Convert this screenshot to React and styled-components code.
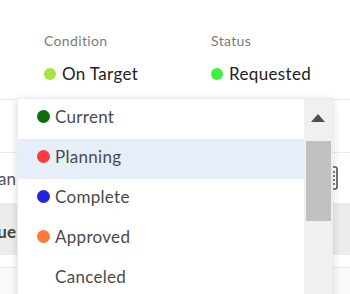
import styled, { createGlobalStyle } from "styled-components";

const GlobalStyle = createGlobalStyle`
  html, body {
    margin: 0;
    padding: 0;
    background: #fff;
    font-family: Lato, "Open Sans", Arial, sans-serif;
  }
`;

const summary = [
  { label: "Condition", value: "On Target", color: "#a6e63a" },
  { label: "Status", value: "Requested", color: "#3cf23c" },
];

const options = [
  { text: "Current", color: "#0b6e0b" },
  { text: "Planning", color: "#ff3a3f", active: true },
  { text: "Complete", color: "#2424dc" },
  { text: "Approved", color: "#ff7a38" },
  { text: "Canceled" },
];

export default function App() {
  return (
    <>
      <GlobalStyle />
      <Page>
        <Summary>
          {summary.map((item) => (
            <Field key={item.label}>
              <Label>{item.label}</Label>
              <Value>
                <Dot $color={item.color} />
                {item.value}
              </Value>
            </Field>
          ))}
        </Summary>
        <BlankRow />
        <ToolRow>
          <Clip>
            <span>Plan</span>
          </Clip>
          <ToolIcon width="20" height="24" viewBox="0 0 20 24">
            <rect x="1" y="1" width="18" height="22" rx="2" fill="#fff" stroke="#555" strokeWidth="1.6" />
            <path d="M13 6h4M13 10h4M13 14h4M13 18h4" stroke="#555" strokeWidth="1.6" />
          </ToolIcon>
        </ToolRow>
        <HeaderRow>
          <Clip $bold>
            <span>Value</span>
          </Clip>
        </HeaderRow>
        <SpacerRow />
        <Rest />

        <Dropdown>
          <List>
            {options.map((opt) => (
              <Option key={opt.text} $active={opt.active}>
                {opt.color ? <Dot $color={opt.color} $size={13} /> : <DotSpace />}
                {opt.text}
              </Option>
            ))}
          </List>
          <Scrollbar>
            <ArrowButton>
              <svg width="14" height="8" viewBox="0 0 14 8">
                <path d="M0 8L7 0L14 8Z" fill="#505050" />
              </svg>
            </ArrowButton>
            <Thumb />
          </Scrollbar>
        </Dropdown>
      </Page>
    </>
  );
}

const Page = styled.div`
  position: relative;
  width: 350px;
  height: 294px;
  overflow: hidden;
`;

const Summary = styled.div`
  display: grid;
  grid-template-columns: 167px 1fr;
  padding: 32px 0 0 44px;
  height: 67px;
  border-bottom: 1px solid #e8e8e8;
`;

const Field = styled.div`
  display: flex;
  flex-direction: column;
  gap: 15px;
`;

const Label = styled.div`
  font-size: 14px;
  line-height: 17px;
  letter-spacing: 0.35px;
  color: #7a7a7a;
`;

const Value = styled.div`
  display: flex;
  align-items: center;
  gap: 6px;
  font-size: 17px;
  line-height: 20px;
  letter-spacing: 0.35px;
  color: #222;
`;

const Dot = styled.span`
  width: ${(p) => p.$size || 12}px;
  height: ${(p) => p.$size || 12}px;
  border-radius: 50%;
  background: ${(p) => p.$color};
  flex-shrink: 0;
`;

const DotSpace = styled.span`
  width: 13px;
  flex-shrink: 0;
`;

const BlankRow = styled.div`
  height: 52px;
  border-bottom: 1px solid #ececec;
`;

const ToolRow = styled.div`
  height: 50px;
  display: flex;
  align-items: center;
  justify-content: space-between;
  padding-right: 12px;
`;

const Clip = styled.div`
  width: 16px;
  overflow: hidden;
  display: flex;
  justify-content: flex-end;
  font-size: 17px;
  color: ${(p) => (p.$bold ? "#444" : "#555")};
  font-weight: ${(p) => (p.$bold ? 700 : 400)};
  white-space: nowrap;
`;

const ToolIcon = styled.svg`
  display: block;
`;

const HeaderRow = styled.div`
  height: 52px;
  display: flex;
  align-items: center;
  padding-top: 4px;
  box-sizing: border-box;
  background: #ececec;
`;

const SpacerRow = styled.div`
  height: 12px;
  border-bottom: 1px solid #ececec;
`;

const Rest = styled.div`
  height: 40px;
  background: #fafafa;
`;

const Dropdown = styled.div`
  position: absolute;
  left: 17px;
  top: 98px;
  width: 316px;
  height: 230px;
  box-sizing: border-box;
  border: 1px solid #ececec;
  background: #fff;
  box-shadow: 0 2px 8px rgba(0, 0, 0, 0.14);
  display: flex;
`;

const List = styled.div`
  flex: 1;
  display: flex;
  flex-direction: column;
`;

const Option = styled.div`
  height: 40px;
  box-sizing: border-box;
  padding: 0 0 5px 19px;
  display: flex;
  align-items: center;
  gap: 5px;
  font-size: 17px;
  letter-spacing: 0.3px;
  color: #4a4a4a;
  background: ${(p) => (p.$active ? "#e6eff9" : "transparent")};
`;

const Scrollbar = styled.div`
  width: 28px;
  background: #f0f0f0;
  display: flex;
  flex-direction: column;
  align-items: center;
`;

const ArrowButton = styled.div`
  height: 42px;
  width: 100%;
  display: flex;
  align-items: center;
  justify-content: center;
  padding-bottom: 4px;
  box-sizing: border-box;
`;

const Thumb = styled.div`
  width: 25px;
  height: 80px;
  background: #c1c1c1;
`;
